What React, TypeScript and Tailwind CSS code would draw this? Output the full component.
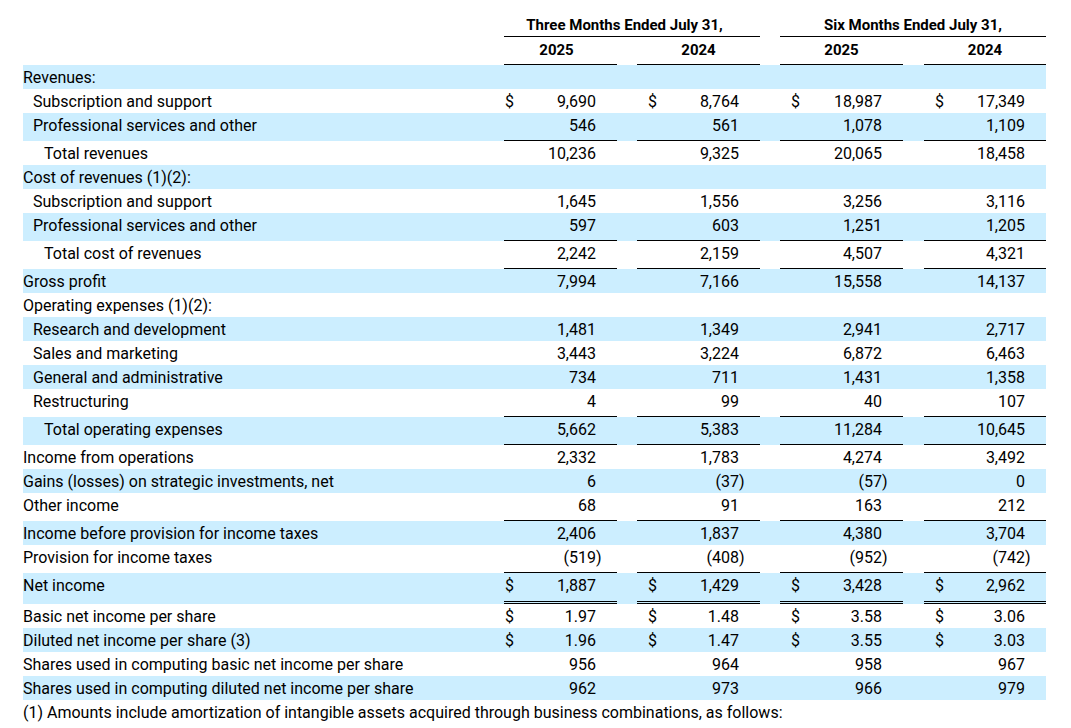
import React from "react";

type Row = {
  label: string;
  indent?: 0 | 1 | 2;
  vals?: string[];
  dollar?: boolean;
  ul?: "single" | "double";
};

const rows: Row[] = [
  { label: "Revenues:" },
  { label: "Subscription and support", indent: 1, vals: ["9,690", "8,764", "18,987", "17,349"], dollar: true },
  { label: "Professional services and other", indent: 1, vals: ["546", "561", "1,078", "1,109"], ul: "single" },
  { label: "Total revenues", indent: 2, vals: ["10,236", "9,325", "20,065", "18,458"] },
  { label: "Cost of revenues (1)(2):" },
  { label: "Subscription and support", indent: 1, vals: ["1,645", "1,556", "3,256", "3,116"] },
  { label: "Professional services and other", indent: 1, vals: ["597", "603", "1,251", "1,205"], ul: "single" },
  { label: "Total cost of revenues", indent: 2, vals: ["2,242", "2,159", "4,507", "4,321"], ul: "single" },
  { label: "Gross profit", vals: ["7,994", "7,166", "15,558", "14,137"] },
  { label: "Operating expenses (1)(2):" },
  { label: "Research and development", indent: 1, vals: ["1,481", "1,349", "2,941", "2,717"] },
  { label: "Sales and marketing", indent: 1, vals: ["3,443", "3,224", "6,872", "6,463"] },
  { label: "General and administrative", indent: 1, vals: ["734", "711", "1,431", "1,358"] },
  { label: "Restructuring", indent: 1, vals: ["4", "99", "40", "107"], ul: "single" },
  { label: "Total operating expenses", indent: 2, vals: ["5,662", "5,383", "11,284", "10,645"], ul: "single" },
  { label: "Income from operations", vals: ["2,332", "1,783", "4,274", "3,492"] },
  { label: "Gains (losses) on strategic investments, net", vals: ["6", "(37)", "(57)", "0"] },
  { label: "Other income", vals: ["68", "91", "163", "212"], ul: "single" },
  { label: "Income before provision for income taxes", vals: ["2,406", "1,837", "4,380", "3,704"] },
  { label: "Provision for income taxes", vals: ["(519)", "(408)", "(952)", "(742)"], ul: "single" },
  { label: "Net income", vals: ["1,887", "1,429", "3,428", "2,962"], dollar: true, ul: "double" },
  { label: "Basic net income per share", vals: ["1.97", "1.48", "3.58", "3.06"], dollar: true },
  { label: "Diluted net income per share (3)", vals: ["1.96", "1.47", "3.55", "3.03"], dollar: true },
  { label: "Shares used in computing basic net income per share", vals: ["956", "964", "958", "967"] },
  { label: "Shares used in computing diluted net income per share", vals: ["962", "973", "966", "979"] },
];

const colW = ["w-[113px]", "w-[123px]", "w-[123px]", "w-[122px]"];
const gapW = ["w-[20px]", "w-[20px]", "w-[21px]"];
const dollarPad = ["pl-[1px]", "pl-[11px]", "pl-[11px]", "pl-[11px]"];
const indentCls = ["pl-0", "pl-[10px]", "pl-[21px]"];

function ValueCell({ i, v, dollar, ul }: { i: number; v?: string; dollar?: boolean; ul?: "single" | "double" }) {
  const neg = v ? v.startsWith("(") : false;
  const num = v ? (neg ? v.slice(0, -1) : v) : "";
  const border =
    ul === "single"
      ? "border-b border-black pb-[3px]"
      : ul === "double"
      ? "border-b-[3px] border-double border-black pb-[4px]"
      : "";
  return (
    <div className={`${colW[i]} shrink-0 flex pt-[2px] ${border}`}>
      <span className={`${dollarPad[i]} w-[24px] shrink-0`}>{dollar ? "$" : ""}</span>
      <span className="flex-1 text-right">{num}</span>
      <span className="w-[21px] shrink-0 text-left">{neg ? ")" : ""}</span>
    </div>
  );
}

export default function App() {
  return (
    <div
      className="bg-white text-black min-h-[728px] w-[1071px] text-[16px] leading-[22px]"
      style={{ fontFamily: "Roboto, 'Liberation Sans', sans-serif" }}
    >
      <div className="ml-[23px] w-[1023px]">
        {/* Header row 1 */}
        <div className="flex pt-[15px] font-bold text-[15px] leading-[21px]">
          <div className="w-[481px] shrink-0" />
          <div className="w-[256px] shrink-0 border-b border-black text-center pr-[15px]">
            Three Months Ended July 31,
          </div>
          <div className="w-[20px] shrink-0" />
          <div className="w-[266px] shrink-0 border-b border-black text-center">Six Months Ended July 31,</div>
        </div>
        {/* Header row 2 */}
        <div className="flex font-bold text-[15px] leading-[21px]">
          <div className="w-[481px] shrink-0" />
          <div className="w-[113px] shrink-0 border-b border-black text-center pt-[3px] pb-[3px] pr-[8px]">2025</div>
          <div className="w-[20px] shrink-0" />
          <div className="w-[123px] shrink-0 border-b border-black text-center pt-[3px] pb-[3px]">2024</div>
          <div className="w-[20px] shrink-0" />
          <div className="w-[123px] shrink-0 border-b border-black text-center pt-[3px] pb-[3px]">2025</div>
          <div className="w-[21px] shrink-0" />
          <div className="w-[122px] shrink-0 border-b border-black text-center pt-[3px] pb-[3px]">2024</div>
        </div>
        {/* Body */}
        {rows.map((r, idx) => (
          <div key={idx} className={`flex ${idx % 2 === 0 ? "bg-[#cceeff]" : "bg-white"}`}>
            <div className={`w-[481px] shrink-0 whitespace-nowrap pt-[2px] ${indentCls[r.indent ?? 0]}`}>{r.label}</div>
            {[0, 1, 2, 3].map((i) => (
              <React.Fragment key={i}>
                <ValueCell i={i} v={r.vals?.[i]} dollar={r.dollar} ul={r.ul} />
                {i < 3 && <div className={`${gapW[i]} shrink-0`} />}
              </React.Fragment>
            ))}
          </div>
        ))}
        <div className="whitespace-nowrap pt-[2px]">
          (1) Amounts include amortization of intangible assets acquired through business combinations, as follows:
        </div>
      </div>
    </div>
  );
}
